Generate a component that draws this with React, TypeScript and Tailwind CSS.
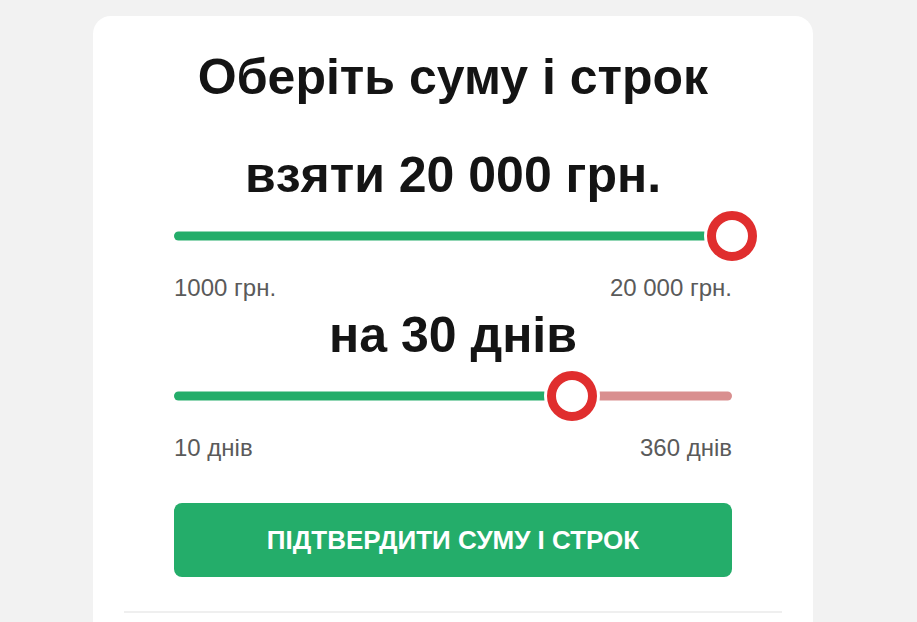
import React from "react";

type SliderProps = {
  percent: number;
  restColor?: string;
};

function RangeSlider({ percent, restColor }: SliderProps) {
  return (
    <div className="relative h-[50px] w-full">
      <div
        className="absolute left-0 top-1/2 h-[9px] -translate-y-1/2 rounded-full bg-[#24ad6a]"
        style={{ width: `${percent}%` }}
      />
      {restColor ? (
        <div
          className="absolute right-0 top-1/2 h-[9px] -translate-y-1/2 rounded-r-full bg-[#d98f8f]"
          style={{ left: `${percent}%` }}
        />
      ) : null}
      <div
        className="absolute top-1/2 h-[50px] w-[50px] -translate-x-1/2 -translate-y-1/2 rounded-full border-[9px] border-[#e02e2e] bg-white shadow-[0_0_0_3px_#ffffff]"
        style={{ left: `${percent}%` }}
      />
    </div>
  );
}

export default function App() {
  return (
    <div
      className="min-h-[622px] bg-[#f2f2f2] pt-4"
      style={{ fontFamily: '"Liberation Sans", Arial, sans-serif' }}
    >
      <div className="ml-[93px] w-[720px] rounded-t-[18px] bg-white px-[31px] pt-[33px]">
        <h1 className="text-center text-[50px] font-bold leading-[56px] text-[#141414]">
          Оберіть суму і строк
        </h1>

        <div className="px-[50px]">
          <p className="mt-[42px] text-center text-[50px] font-bold leading-[56px] text-[#141414]">
            взяти 20 000 грн.
          </p>
          <div className="mt-2">
            <RangeSlider percent={100} />
          </div>
          <div className="mt-[13px] flex justify-between text-[24px] leading-[28px] text-[#5a5a5a]">
            <span>1000 грн.</span>
            <span>20 000 грн.</span>
          </div>

          <p className="mt-[5px] text-center text-[50px] font-bold leading-[56px] text-[#141414]">
            на 30 днів
          </p>
          <div className="mt-2">
            <RangeSlider percent={71.4} restColor="#d98f8f" />
          </div>
          <div className="mt-[13px] flex justify-between text-[24px] leading-[28px] text-[#5a5a5a]">
            <span>10 днів</span>
            <span>360 днів</span>
          </div>

          <button className="mt-[41px] flex h-[74px] w-full items-center justify-center rounded-lg bg-[#24ad6a] text-[26px] font-bold uppercase text-white">
            Підтвердити суму і строк
          </button>
        </div>

        <div className="mt-[34px] h-[2px] w-full bg-[#efefef]" />
        <div className="h-8" />
      </div>
    </div>
  );
}
